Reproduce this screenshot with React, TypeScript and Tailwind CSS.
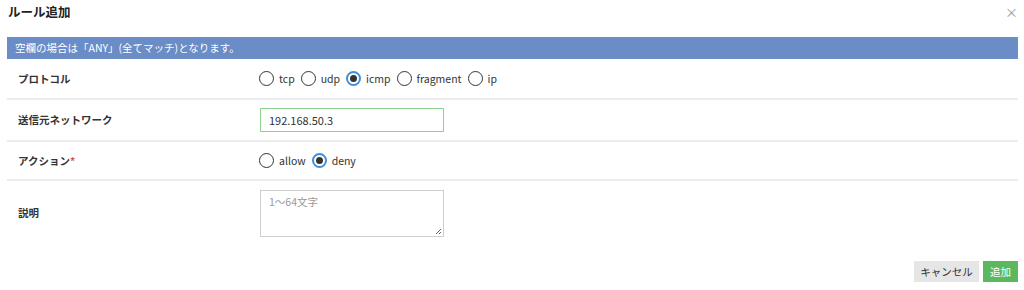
import React from "react";

const font = {
  fontFamily: '"Noto Sans CJK JP", "Noto Sans", sans-serif',
};

function Radio({ label, checked }: { label: string; checked?: boolean }) {
  return (
    <label className="flex items-center gap-[5px] mr-[6px] text-[10.5px] text-[#333]">
      {checked ? (
        <span className="w-[15px] h-[15px] rounded-full border-[2px] border-[#3d8fe0] flex items-center justify-center bg-white">
          <span className="w-[7px] h-[7px] rounded-full bg-[#333]" />
        </span>
      ) : (
        <span className="w-[15px] h-[15px] rounded-full border-[1.5px] border-[#333] bg-white" />
      )}
      <span>{label}</span>
    </label>
  );
}

export default function App() {
  return (
    <div className="w-[1024px] h-[290px] bg-white text-[#333] relative" style={font}>
      <div className="h-[28px] flex items-center justify-between pl-[8px] pr-[6px]">
        <span className="text-[12.5px] font-bold text-[#222] leading-none -mt-[4px]">ルール追加</span>
        <span className="text-[13px] text-[#999] leading-none -mt-[6px]">×</span>
      </div>
      <div className="pl-[7px] pr-[6px] pt-[9px]">
        <div className="h-[22px] bg-[#6a8cc7] text-white text-[10.5px] flex items-center pl-[8px]">
          空欄の場合は「ANY」(全てマッチ)となります。
        </div>
        <div className="flex items-center h-[41px] border-b-[2px] border-[#ececec]">
          <div className="w-[252px] pl-[11px] text-[10.5px] font-bold">プロトコル</div>
          <div className="flex items-center">
            <Radio label="tcp" />
            <Radio label="udp" />
            <Radio label="icmp" checked />
            <Radio label="fragment" />
            <Radio label="ip" />
          </div>
        </div>
        <div className="flex items-center h-[42px] border-b-[2px] border-[#ececec]">
          <div className="w-[253px] pl-[11px] text-[10.5px] font-bold">送信元ネットワーク</div>
          <div className="w-[184px] h-[24px] border border-[#8fd18f] flex items-center pl-[8px] text-[11px] text-[#333]">
            192.168.50.3
          </div>
        </div>
        <div className="flex items-center h-[39px] border-b-[2px] border-[#ececec]">
          <div className="w-[252px] pl-[11px] text-[10.5px] font-bold">
            アクション<span className="text-[#d9534f]">*</span>
          </div>
          <div className="flex items-center">
            <Radio label="allow" />
            <Radio label="deny" checked />
          </div>
        </div>
        <div className="flex items-center h-[64px]">
          <div className="w-[253px] pl-[11px] text-[10.5px] font-bold">説明</div>
          <div className="w-[184px] h-[47px] border border-[#cfcfcf] relative pl-[8px] pt-[3px] text-[10.5px] text-[#999]">
            1〜64文字
            <svg className="absolute right-[1px] bottom-[1px]" width="7" height="7" viewBox="0 0 7 7">
              <path d="M6 1 L1 6 M6 4 L4 6" stroke="#666" strokeWidth="1" />
            </svg>
          </div>
        </div>
        <div className="flex justify-end gap-[4px] mt-[16px]">
          <div className="w-[65px] h-[21px] bg-[#e6e6e6] text-[#333] text-[10.5px] flex items-center justify-center">
            キャンセル
          </div>
          <div className="w-[35px] h-[21px] bg-[#5cb85c] text-white text-[10.5px] flex items-center justify-center">
            追加
          </div>
        </div>
      </div>
    </div>
  );
}
